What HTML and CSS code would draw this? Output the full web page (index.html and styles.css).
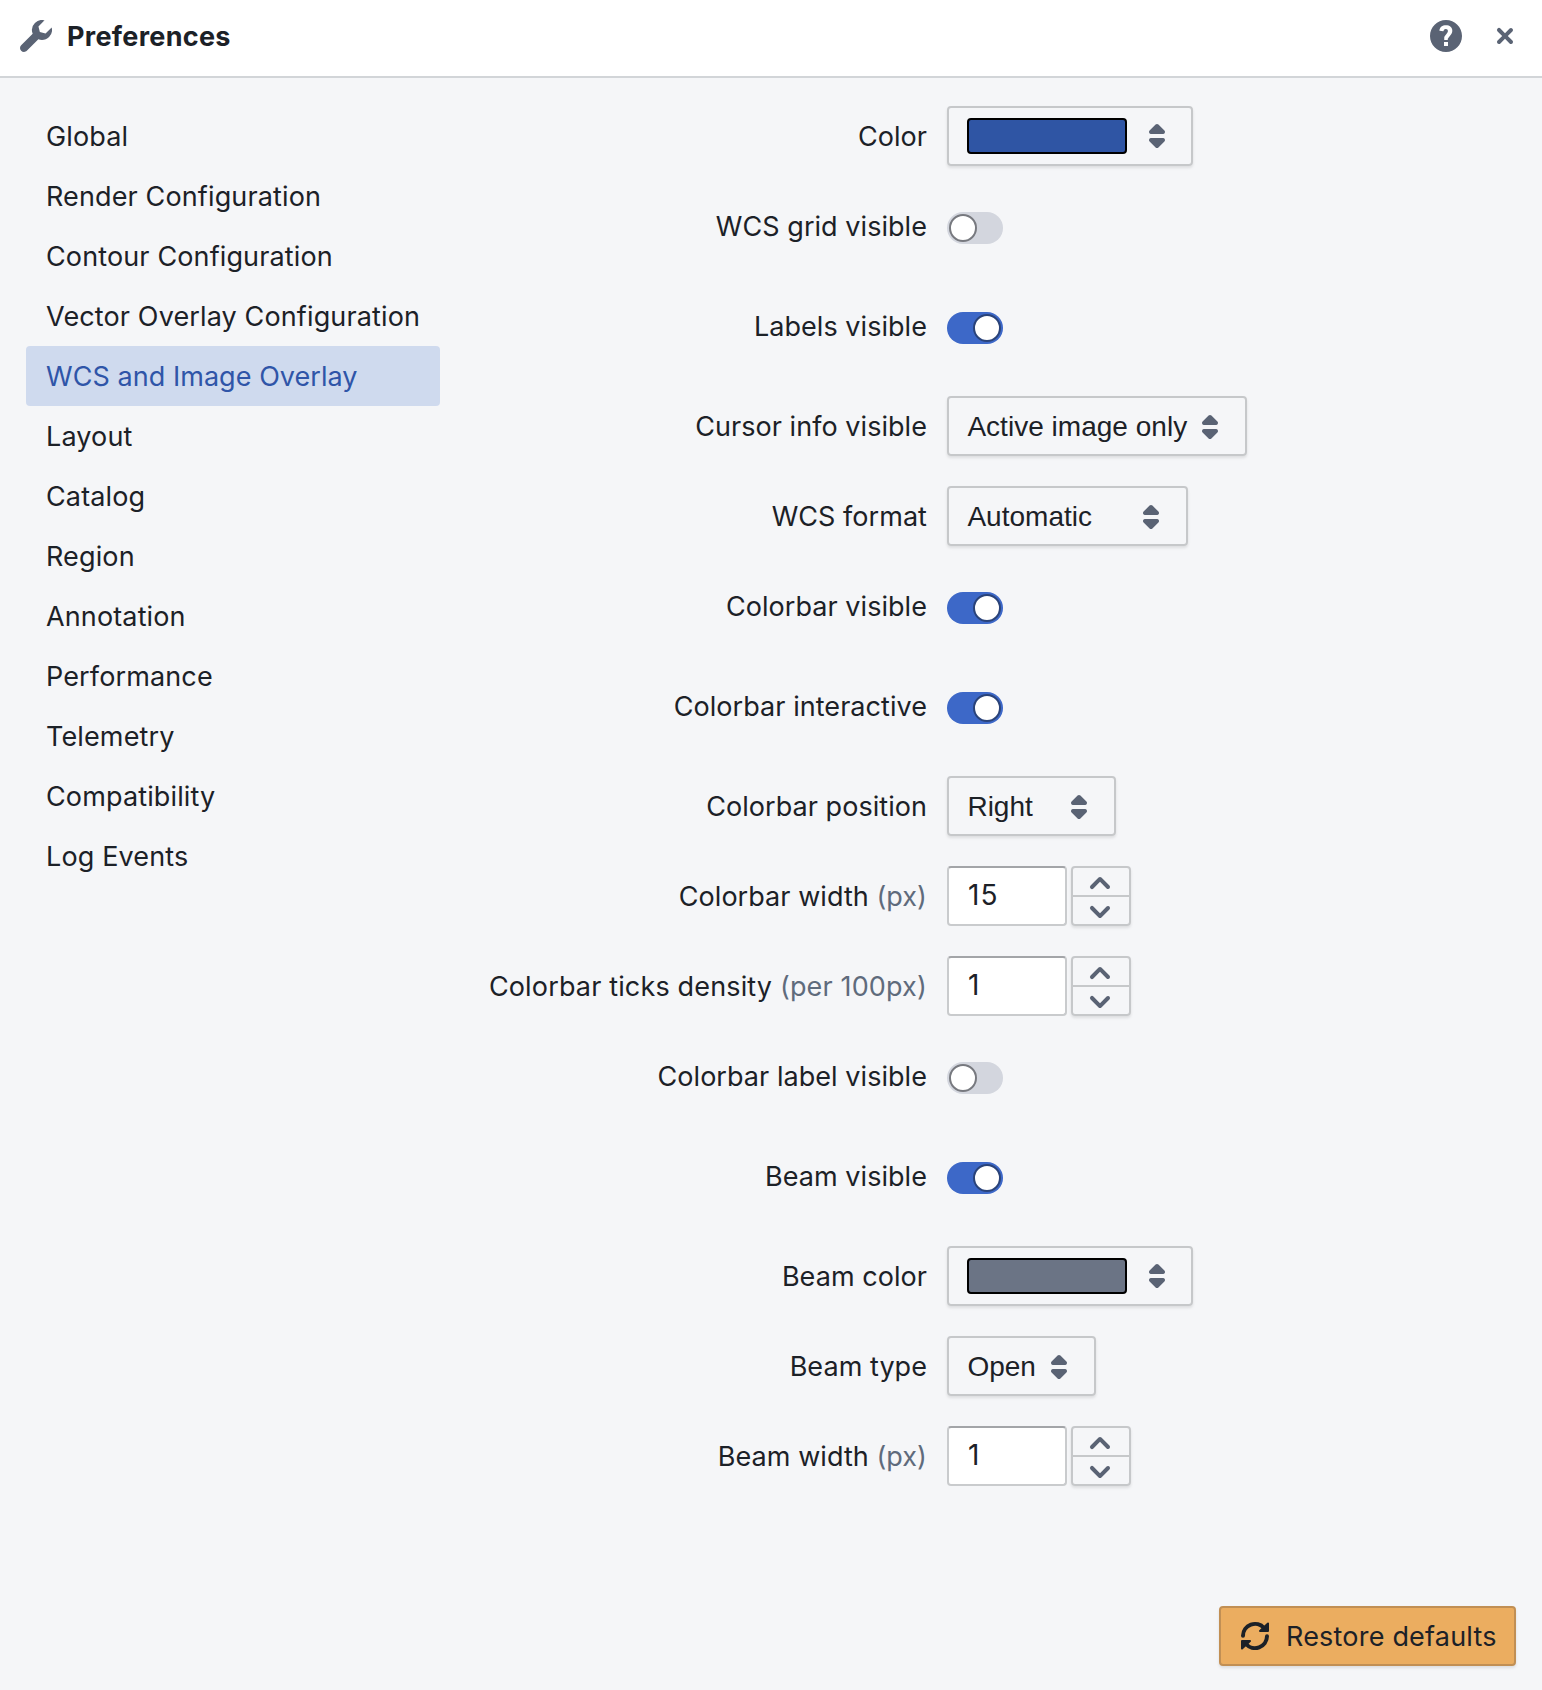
FILE: index.html
```html
<!DOCTYPE html>
<html lang="en">
<head>
<meta charset="utf-8">
<title>Preferences</title>
<link rel="stylesheet" href="styles.css">
</head>
<body>
<svg class="sprite" aria-hidden="true">
  <symbol id="caret" viewBox="0 0 16 16"><path d="M5 7h6a1.003 1.003 0 00.71-1.71l-3-3C8.53 2.11 8.28 2 8 2s-.53.11-.71.29l-3 3A1.003 1.003 0 005 7zm6 2H5a1.003 1.003 0 00-.71 1.71l3 3c.18.18.43.29.71.29s.53-.11.71-.29l3-3A1.003 1.003 0 0011 9z"/></symbol>
  <symbol id="up" viewBox="0 0 16 16"><path d="M12.71 9.29l-4-4C8.53 5.11 8.28 5 8 5s-.53.11-.71.29l-4 4a1.003 1.003 0 001.42 1.42L8 7.41l3.29 3.29c.18.19.43.3.71.3a1.003 1.003 0 00.71-1.71z"/></symbol>
  <symbol id="down" viewBox="0 0 16 16"><path d="M12 5c-.28 0-.53.11-.71.29L8 8.59l-3.29-3.3a1.003 1.003 0 00-1.42 1.42l4 4c.18.18.43.29.71.29s.53-.11.71-.29l4-4A1.003 1.003 0 0012 5z"/></symbol>
</svg>
<div class="dialog">
  <header class="header">
    <svg class="icon" viewBox="0 0 16 16"><path d="M15.83 3.7l-3.06 3.05-2.84-.7-.7-2.83L12.29.17a5.004 5.004 0 00-4.83 1.29 4.967 4.967 0 00-1.12 5.36L.58 12.58c-.36.36-.58.86-.58 1.41 0 1.1.9 2 2 2 .55 0 1.05-.22 1.41-.59l5.77-5.77c1.79.69 3.91.33 5.35-1.12a4.986 4.986 0 001.3-4.81z"/></svg>
    <h1 class="title">Preferences</h1>
    <svg class="icon" viewBox="0 0 16 16"><path fill-rule="evenodd" d="M8 0C3.58 0 0 3.58 0 8s3.58 8 8 8 8-3.58 8-8-3.58-8-8-8zm1 13H7v-2h2v2zm1.93-6.48c-.14.32-.35.64-.62.97L9.25 8.83c-.12.15-.24.29-.28.42-.04.13-.09.3-.09.52V10H7.12V8.88s.05-.51.21-.71L8.4 6.73c.22-.26.35-.49.44-.68.09-.19.12-.38.12-.58 0-.3-.1-.55-.28-.75-.18-.19-.44-.28-.76-.28-.33 0-.59.1-.78.29-.19.19-.33.46-.4.81-.03.11-.1.15-.2.14l-1.7-.25c-.12-.01-.16-.08-.14-.19.12-.82.46-1.47 1.03-1.94.57-.48 1.32-.72 2.25-.72.47 0 .9.07 1.29.22s.72.34 1 .59c.28.25.49.55.65.89.15.35.22.72.22 1.12s-.07.75-.21 1.08z"/></svg>
    <svg class="icon close" viewBox="0 0 16 16"><path d="M9.41 8l2.29-2.29c.19-.18.3-.43.3-.71a1.003 1.003 0 00-1.71-.71L8 6.59l-2.29-2.3a1.003 1.003 0 00-1.42 1.42L6.59 8 4.3 10.29c-.19.18-.3.43-.3.71a1.003 1.003 0 001.71.71L8 9.41l2.29 2.29c.18.19.43.3.71.3a1.003 1.003 0 00.71-1.71L9.41 8z"/></svg>
  </header>
  <main class="body">
    <nav class="tabs">
      <div class="tab">Global</div>
      <div class="tab">Render Configuration</div>
      <div class="tab">Contour Configuration</div>
      <div class="tab">Vector Overlay Configuration</div>
      <div class="tab selected">WCS and Image Overlay</div>
      <div class="tab">Layout</div>
      <div class="tab">Catalog</div>
      <div class="tab">Region</div>
      <div class="tab">Annotation</div>
      <div class="tab">Performance</div>
      <div class="tab">Telemetry</div>
      <div class="tab">Compatibility</div>
      <div class="tab">Log Events</div>
    </nav>
    <section class="panel">
      <div class="row"><label class="label">Color</label><div class="select color"><span class="swatch blue"></span><svg class="icon"><use href="#caret"/></svg></div></div>
      <div class="row tall"><label class="label">WCS grid visible</label><span class="switch"></span></div>
      <div class="row tall"><label class="label">Labels visible</label><span class="switch on"></span></div>
      <div class="row"><label class="label">Cursor info visible</label><div class="select cursor">Active image only<svg class="icon"><use href="#caret"/></svg></div></div>
      <div class="row"><label class="label">WCS format</label><div class="select format">Automatic<svg class="icon"><use href="#caret"/></svg></div></div>
      <div class="row tall"><label class="label">Colorbar visible</label><span class="switch on"></span></div>
      <div class="row tall"><label class="label">Colorbar interactive</label><span class="switch on"></span></div>
      <div class="row"><label class="label">Colorbar position</label><div class="select position">Right<svg class="icon"><use href="#caret"/></svg></div></div>
      <div class="row"><label class="label">Colorbar width <span class="unit">(px)</span></label><div class="number">15</div><div class="stepper"><span class="step"><svg class="icon"><use href="#up"/></svg></span><span class="step"><svg class="icon"><use href="#down"/></svg></span></div></div>
      <div class="row"><label class="label dense">Colorbar ticks density <span class="unit">(per 100px)</span></label><div class="number">1</div><div class="stepper"><span class="step"><svg class="icon"><use href="#up"/></svg></span><span class="step"><svg class="icon"><use href="#down"/></svg></span></div></div>
      <div class="row tall"><label class="label">Colorbar label visible</label><span class="switch"></span></div>
      <div class="row tall"><label class="label">Beam visible</label><span class="switch on"></span></div>
      <div class="row"><label class="label">Beam color</label><div class="select color"><span class="swatch gray"></span><svg class="icon"><use href="#caret"/></svg></div></div>
      <div class="row"><label class="label">Beam type</label><div class="select type">Open<svg class="icon"><use href="#caret"/></svg></div></div>
      <div class="row"><label class="label">Beam width <span class="unit">(px)</span></label><div class="number">1</div><div class="stepper"><span class="step"><svg class="icon"><use href="#up"/></svg></span><span class="step"><svg class="icon"><use href="#down"/></svg></span></div></div>
    </section>
  </main>
  <footer class="footer">
    <button class="restore"><svg class="icon" viewBox="0 0 32 32"><g stroke="currentColor" stroke-linecap="round" stroke-linejoin="round"><path d="M4 15.700A12 12 0 0 1 25 8M28 16.300A12 12 0 0 1 7 24" fill="none" stroke-width="4"/><path d="M29 3.500v7.500h-8zM3 28.500v-7.500h8z" stroke-width="2"/></g></svg><span class="caption">Restore defaults</span></button>
  </footer>
</div>
</body>
</html>
```

FILE: styles.css
```css
*, *::before { box-sizing: border-box; }
body {
  margin: 0;
  background: #f5f6f8;
  color: #1c2127;
  font: 27px/36px Inter, "Liberation Sans", sans-serif;
  letter-spacing: 0.05px;
}
.sprite { display: none; }
.dialog { display: flex; flex-direction: column; height: 1690px; }
.icon { width: 32px; height: 32px; flex: none; fill: #5a6374; }
.header {
  display: flex;
  align-items: center;
  height: 78px;
  padding: 0 21px 4px 20px;
  background: #fff;
  border-bottom: 2px solid #d2d5d8;
}
.title { flex: 1; margin: 0 0 0 15px; padding-top: 2px; font-size: 27px; font-weight: 650; letter-spacing: 0.3px; }
.close { margin-left: 27px; }
.body { display: flex; flex: 1; padding: 28px 26px 0; }
.tabs { width: 414px; }
.tab { height: 60px; padding: 0 20px; line-height: 62px; border-radius: 4px; letter-spacing: 0.13px; white-space: nowrap; }
.selected { background: #cfdaee; color: #2f55a8; letter-spacing: 0.05px; }
.panel { display: flex; flex-direction: column; gap: 30px; margin-left: 40px; }
.row { display: flex; height: 60px; }
.tall { height: 70px; }
.label { width: 447px; margin-right: 20px; line-height: 62px; text-align: right; white-space: nowrap; }
.dense { letter-spacing: 0.15px; }
.unit { color: #5f6b7c; }
.select {
  display: flex;
  align-items: center;
  justify-content: space-between;
  height: 60px;
  border: 2px solid #c6c8ca;
  border-radius: 4px;
  box-shadow: 0 2px 3px rgba(17, 20, 24, 0.1);
  font: 28px/32px "Liberation Sans", Arial, sans-serif;
  letter-spacing: 0.02px;
  white-space: nowrap;
}
.color { width: 246px; padding: 0 18px; }
.cursor { width: 300px; padding: 2px 19px 0 18.400px; }
.format { width: 241px; padding: 2px 19px 0 18.400px; }
.position { width: 169px; padding: 2px 19px 0 18.400px; }
.type { width: 149px; padding: 2px 19px 0 18.400px; }
.swatch { width: 160px; height: 36px; border: 2px solid #000; border-radius: 4px; }
.blue { background: #2f55a4; }
.gray { background: #6b7485; }
.switch {
  display: flex;
  width: 56px;
  height: 32px;
  margin-top: 16px;
  padding: 2px;
  border-radius: 16px;
  background: #d3d6de;
}
.switch::before {
  content: "";
  width: 28px;
  height: 28px;
  border: 2px solid #77797f;
  border-radius: 50%;
  background: #fff;
}
.on { justify-content: flex-end; background: #3d68c8; }
.on::before { border-color: #2a4379; }
.number {
  width: 120px;
  height: 60px;
  padding-left: 19px;
  border: 2px solid #c9cbcd;
  border-top-color: #a3a5a8;
  border-radius: 4px;
  background: #fff;
  font-size: 28px;
  letter-spacing: 1.2px;
  line-height: 54px;
}
.stepper {
  width: 60px;
  height: 60px;
  margin-left: 4px;
  border: 2px solid #c6c8ca;
  border-radius: 4px;
  box-shadow: 0 2px 3px rgba(17, 20, 24, 0.1);
}
.step { display: flex; align-items: center; justify-content: center; height: 27px; padding: 2px 2px 0 0; }
.step:first-child { height: 29px; border-bottom: 2px solid #c6c8ca; }
.footer { display: flex; justify-content: flex-end; padding: 0 26px 24px; }
.restore {
  display: flex;
  align-items: center;
  gap: 15px;
  width: 297px;
  height: 60px;
  padding: 0 0 0 18px;
  border: 2px solid #c18f54;
  border-radius: 4px;
  background: #ebad60;
  box-shadow: 0 2px 3px rgba(17, 20, 24, 0.1);
  color: #1c2127;
  font: inherit;
  letter-spacing: 0.2px;
  white-space: nowrap;
}
.caption { padding-top: 2px; }
.restore .icon { fill: currentColor; }
```
